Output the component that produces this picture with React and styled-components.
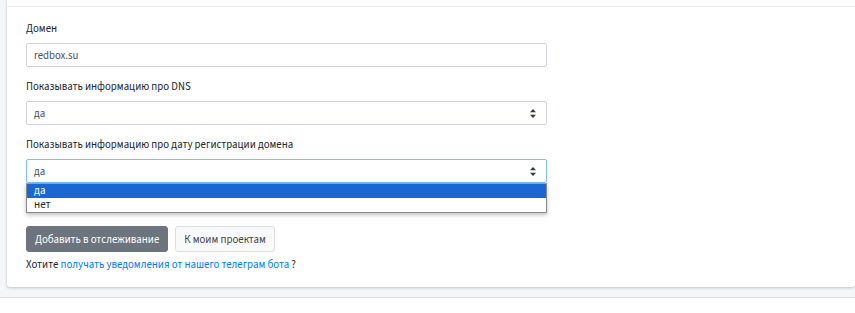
import React from 'react';
import styled, { createGlobalStyle } from 'styled-components';

const GlobalStyle = createGlobalStyle`
  html, body {
    margin: 0;
    padding: 0;
    background: #f4f6f9;
  }
  body {
    font-family: "Source Sans 3", Lato, Roboto, sans-serif;
    font-size: 10.8px;
    color: #212529;
  }
`;

const Page = styled.div`
  width: 855px;
  height: 313px;
  overflow: hidden;
  display: flex;
  flex-direction: column;
`;

const Content = styled.div`
  padding: 0 0 10px 7px;
`;

const Card = styled.div`
  background: #fff;
  border-radius: 0 0 3px 3px;
  box-shadow: 0 0 1px rgba(0, 0, 0, 0.125), 0 1px 3px rgba(0, 0, 0, 0.2);
`;

const CardHeader = styled.div`
  height: 6px;
  border-bottom: 1px solid rgba(0, 0, 0, 0.08);
`;

const CardBody = styled.div`
  padding: 13px 19px 13px 19px;
`;

const Group = styled.div`
  margin-bottom: ${p => p.$gap ?? 11}px;
  width: 521px;
  position: relative;
`;

const Label = styled.label`
  display: block;
  line-height: 18px;
  margin-bottom: 5px;
`;

const Control = styled.div`
  box-sizing: border-box;
  height: 24px;
  border: 1px solid ${p => (p.$focus ? '#80bdff' : '#ced4da')};
  border-radius: 2px;
  padding: 0 7px;
  display: flex;
  align-items: center;
  justify-content: space-between;
  color: #495057;
  background: #fff;
`;

const ArrowIcon = styled.svg`
  margin-right: 3px;
`;

const Arrows = () => (
  <ArrowIcon width="6" height="9" viewBox="0 0 6 9">
    <path d="M3 0L6 3.3H0z" fill="#343a40" />
    <path d="M3 9L6 5.7H0z" fill="#343a40" />
  </ArrowIcon>
);

const Dropdown = styled.ul`
  position: absolute;
  left: 0;
  right: 0;
  top: 100%;
  margin: 0;
  padding: 0;
  list-style: none;
  background: #fff;
  border: 1px solid #8a8a8a;
  border-top: 1px solid #a0a0a0;
  box-shadow: 0 2px 4px rgba(0, 0, 0, 0.25);
  z-index: 2;
`;

const Option = styled.li`
  height: 14px;
  line-height: 14px;
  padding-left: 7px;
  font-size: 11px;
  overflow: hidden;
  background: ${p => (p.$active ? '#1967d2' : '#fff')};
  color: ${p => (p.$active ? '#fff' : '#212529')};
`;

const Actions = styled.div`
  display: flex;
  gap: 7px;
  margin-top: 43px;
  margin-bottom: 4px;
`;

const Button = styled.button`
  height: 26px;
  padding: 0 8px;
  border-radius: 3px;
  font-family: inherit;
  font-size: 10.8px;
  border: 1px solid ${p => (p.$primary ? '#6c757d' : '#ddd')};
  background: ${p => (p.$primary ? '#6c757d' : '#f8f9fa')};
  color: ${p => (p.$primary ? '#fff' : '#444')};
`;

const Note = styled.p`
  margin: 0;
  line-height: 18px;
`;

const Link = styled.a`
  color: #007bff;
  text-decoration: none;
`;

const Footer = styled.div`
  flex: 1;
  background: #fff;
  border-top: 1px solid #dee2e6;
`;

export default function App() {
  return (
    <Page>
      <GlobalStyle />
      <Content>
        <Card>
          <CardHeader />
          <CardBody>
            <Group>
              <Label>Домен</Label>
              <Control>redbox.su</Control>
            </Group>
            <Group>
              <Label>Показывать информацию про DNS</Label>
              <Control>
                да
                <Arrows />
              </Control>
            </Group>
            <Group $gap={0}>
              <Label>Показывать информацию про дату регистрации домена</Label>
              <Control $focus>
                да
                <Arrows />
              </Control>
              <Dropdown>
                <Option $active>да</Option>
                <Option>нет</Option>
              </Dropdown>
            </Group>
            <Actions>
              <Button $primary>Добавить в отслеживание</Button>
              <Button>К моим проектам</Button>
            </Actions>
            <Note>
              Хотите <Link href="#">получать уведомления от нашего телеграм бота</Link> ?
            </Note>
          </CardBody>
        </Card>
      </Content>
      <Footer />
    </Page>
  );
}
